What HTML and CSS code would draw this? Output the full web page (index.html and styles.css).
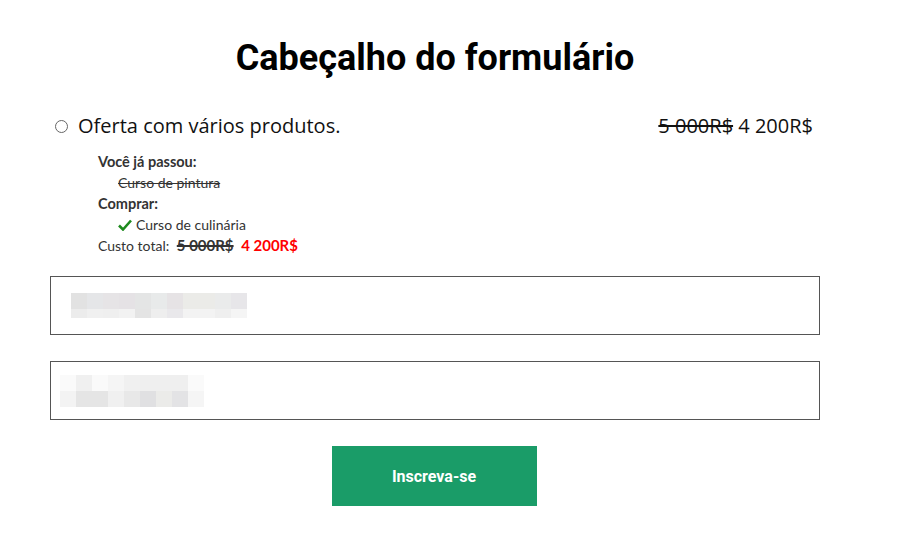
FILE: index.html
```
<!DOCTYPE html>
<html lang="pt">
<head>
    <meta charset="UTF-8">
    <meta name="viewport" content="width=device-width, initial-scale=1.0">
    <title>Formulário</title>
    <link rel="stylesheet" href="styles.css">
</head>
<body>
    <div class="form-wrap">
        <h1 class="form-title">Cabeçalho do formulário</h1>

        <div class="offer">
            <label class="offer-row">
                <span class="radio"></span>
                <span class="offer-name">Oferta com vários produtos.</span>
                <span class="offer-price"><s>5 000R$</s> 4 200R$</span>
            </label>
            <div class="offer-details">
                <div class="detail-head">Você já passou:</div>
                <div class="detail-item"><s>Curso de pintura</s></div>
                <div class="detail-head">Comprar:</div>
                <div class="detail-item">
                    <svg class="check" viewBox="0 0 14 12" width="14" height="12"><path d="M1 6.5 L5 10.5 L13 1.5" fill="none" stroke="#1e8a1e" stroke-width="2.6"/></svg>
                    Curso de culinária
                </div>
                <div class="detail-total">Custo total: <s class="old">5 000R$</s> <span class="new">4 200R$</span></div>
            </div>
        </div>

        <div class="field">
            <div class="blur blur-a">
                <div class="blur-row tall">
                    <i style="background:#e2e2e2"></i><i style="background:#e5e6e8"></i><i style="background:#e6e4e6"></i><i style="background:#e5e2e5"></i><i style="background:#e4e5e5"></i><i style="background:#e8eaea"></i><i style="background:#e6e3e5"></i><i style="background:#ebebe8"></i><i style="background:#ebebe8"></i><i style="background:#eaebeb"></i><i style="background:#e7e6e9"></i>
                </div>
                <div class="blur-row short">
                    <i style="background:#ececec"></i><i style="background:#f0f0f0"></i><i style="background:#efefef"></i><i style="background:#f2f2f2"></i><i style="background:#e4e4e4"></i><i style="background:#eeeeee"></i><i style="background:#e9e8eb"></i><i style="background:#f3f3f3"></i><i style="background:#f3f3f3"></i><i style="background:#efefef"></i><i style="background:#f5f5f5"></i>
                </div>
            </div>
        </div>

        <div class="field">
            <div class="blur blur-b">
                <div class="blur-row tall">
                    <i style="background:#fafafa"></i><i style="background:#f0f0f0"></i><i style="background:#fafafa"></i><i style="background:#f5f5f5"></i><i style="background:#f0f0f0"></i><i style="background:#efefef"></i><i style="background:#efefef"></i><i style="background:#efefef"></i><i style="background:#fafafa"></i>
                </div>
                <div class="blur-row tall">
                    <i style="background:#f3f3f3"></i><i style="background:#e5e5e5"></i><i style="background:#e5e5e5"></i><i style="background:#f0f0f0"></i><i style="background:#e8e8e8"></i><i style="background:#e0e0e2"></i><i style="background:#ebebe9"></i><i style="background:#e3e3e5"></i><i style="background:#f5f5f5"></i>
                </div>
            </div>
        </div>

        <div class="submit-row">
            <button type="button" class="submit">Inscreva-se</button>
        </div>
    </div>
</body>
</html>
```
FILE: styles.css
```
body {
    margin: 0;
    background: #fff;
    color: #111;
    font-family: "Open Sans", sans-serif;
}
.form-wrap {
    width: 770px;
    margin-left: 50px;
    padding-top: 34px;
}
.form-title {
    margin: 0;
    text-align: center;
    font-family: Roboto, sans-serif;
    font-weight: 700;
    font-size: 36px;
    line-height: 48px;
    color: #000;
}
.offer {
    margin-top: 30px;
}
.offer-row {
    display: flex;
    align-items: center;
    padding-left: 5px;
    font-size: 20px;
    line-height: 28px;
    color: #111;
}
.radio {
    width: 11px;
    height: 11px;
    border: 1px solid #666;
    border-radius: 50%;
    margin-right: 10px;
}
.offer-name {
    flex: 1;
}
.offer-price {
    font-size: 20px;
    padding-right: 7px;
}
.offer-price s {
    text-decoration-thickness: 2px;
}
.offer-details {
    margin-top: 11px;
    padding-left: 48px;
    font-family: Lato, sans-serif;
    font-size: 14px;
    line-height: 21px;
    color: #333;
}
.detail-head {
    font-weight: 700;
    font-size: 14.5px;
}
.detail-item {
    display: flex;
    align-items: center;
    gap: 4px;
    padding-left: 20px;
}
.detail-item s {
    text-decoration-thickness: 1px;
}
.detail-total .old {
    font-weight: 700;
    font-size: 15px;
    margin-left: 4px;
    text-decoration-thickness: 2px;
}
.detail-total .new {
    font-weight: 700;
    font-size: 15px;
    color: #f00;
    margin-left: 4px;
}
.field {
    height: 57px;
    border: 1px solid #555;
    margin-top: 20px;
    display: flex;
    align-items: center;
}
.field + .field {
    margin-top: 26px;
}
.blur-a {
    margin-left: 20px;
}
.blur-b {
    margin-left: 9px;
}
.blur-row {
    display: flex;
}
.blur-row i {
    width: 16px;
}
.blur-row.tall i {
    height: 16px;
}
.blur-row.short i {
    height: 9px;
}
.submit-row {
    display: flex;
    justify-content: center;
    margin-top: 26px;
    padding-right: 2px;
}
.submit {
    width: 205px;
    height: 60px;
    border: none;
    background: #1a9c68;
    color: #fff;
    font-family: Roboto, sans-serif;
    font-weight: 700;
    font-size: 16px;
    cursor: pointer;
}
```
